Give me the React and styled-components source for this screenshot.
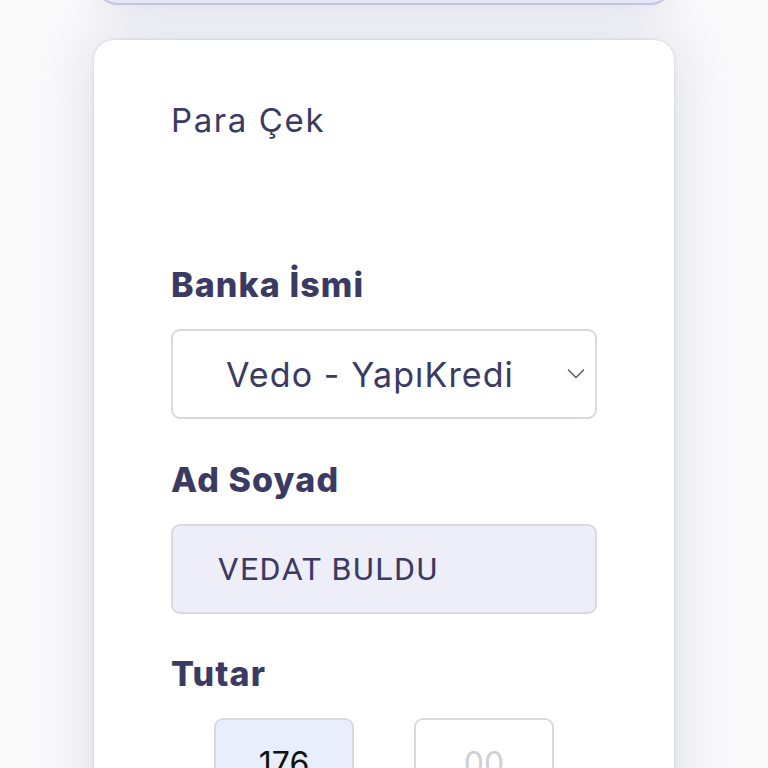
import React from "react";
import styled, { createGlobalStyle } from "styled-components";

const Global = createGlobalStyle`
  html, body { margin: 0; padding: 0; background: #fafafb; }
  body { font-family: Inter, "Noto Sans", sans-serif; overflow: hidden; }
  * { box-sizing: border-box; }
`;

const Page = styled.div`
  width: 768px;
  height: 768px;
  overflow: hidden;
  display: flex;
  flex-direction: column;
  align-items: center;
`;

const TopBar = styled.div`
  flex-shrink: 0;
  width: 574px;
  height: 60px;
  margin-top: -55px;
  background: #e9e9f7;
  border: 2px solid #c6c6e6;
  border-radius: 20px;
  box-shadow: 0 8px 30px rgba(110, 110, 160, 0.14);
`;

const Card = styled.div`
  flex-shrink: 0;
  width: 580px;
  margin-top: 35px;
  background: #ffffff;
  border-radius: 20px;
  padding: 64px 77px 60px 77px;
  box-shadow: 0 0 60px rgba(120, 120, 170, 0.26), 0 0 3px rgba(120, 120, 170, 0.3);
  display: flex;
  flex-direction: column;
`;

const Title = styled.h2`
  margin: 0;
  font-family: Inter, "Noto Sans", sans-serif;
  font-weight: 400;
  font-size: 33px;
  line-height: 32px;
  letter-spacing: 1.6px;
  color: #3a3a63;
`;

const Label = styled.label`
  display: block;
  margin-top: ${(p) => p.$top}px;
  font-family: Inter, "Noto Sans", sans-serif;
  font-weight: 800;
  font-size: 34px;
  line-height: 34px;
  letter-spacing: 1.1px;
  color: #3a3a63;
`;

const Field = styled.div`
  margin-top: 27px;
  height: 90px;
  border: 2px solid #d9d9df;
  border-radius: 9px;
  background: ${(p) => (p.$filled ? "#eeeef8" : "#ffffff")};
  display: flex;
  align-items: center;
  padding-left: ${(p) => p.$pad}px;
  padding-right: 10px;
  color: #3a3a63;
`;

const SelectText = styled.span`
  flex: 1;
  font-family: Inter, "Noto Sans", sans-serif;
  font-size: 34px;
  font-weight: 400;
  letter-spacing: 1.1px;
`;

const InputText = styled.span`
  font-family: Roboto, "Noto Sans", sans-serif;
  font-size: 32px;
  font-weight: 400;
  letter-spacing: 1.5px;
`;

const AmountRow = styled.div`
  margin-top: 27px;
  display: flex;
  gap: 60px;
  padding-left: 43px;
`;

const AmountBox = styled.div`
  width: 140px;
  height: 90px;
  border: 2px solid #d9d9df;
  border-radius: 9px;
  background: ${(p) => (p.$active ? "#e8eefc" : "#ffffff")};
  display: flex;
  align-items: center;
  justify-content: center;
  font-family: Inter, "Noto Sans", sans-serif;
  font-size: 32px;
  color: ${(p) => (p.$placeholder ? "#cfcfd4" : "#111111")};
`;

const Chevron = () => (
  <svg width="18" height="12" viewBox="0 0 18 12" fill="none">
    <path d="M1.5 2 L9 9.5 L16.5 2" stroke="#5a5a6e" strokeWidth="1.5" strokeLinecap="round" strokeLinejoin="round" />
  </svg>
);

export default function App() {
  return (
    <Page>
      <Global />
      <TopBar />
      <Card>
        <Title>Para Çek</Title>
        <Label $top={132}>Banka İsmi</Label>
        <Field $pad={53}>
          <SelectText>Vedo - YapıKredi</SelectText>
          <Chevron />
        </Field>
        <Label $top={44}>Ad Soyad</Label>
        <Field $filled $pad={45}>
          <InputText>VEDAT BULDU</InputText>
        </Field>
        <Label $top={43}>Tutar</Label>
        <AmountRow>
          <AmountBox $active>176</AmountBox>
          <AmountBox $placeholder>00</AmountBox>
        </AmountRow>
      </Card>
    </Page>
  );
}
